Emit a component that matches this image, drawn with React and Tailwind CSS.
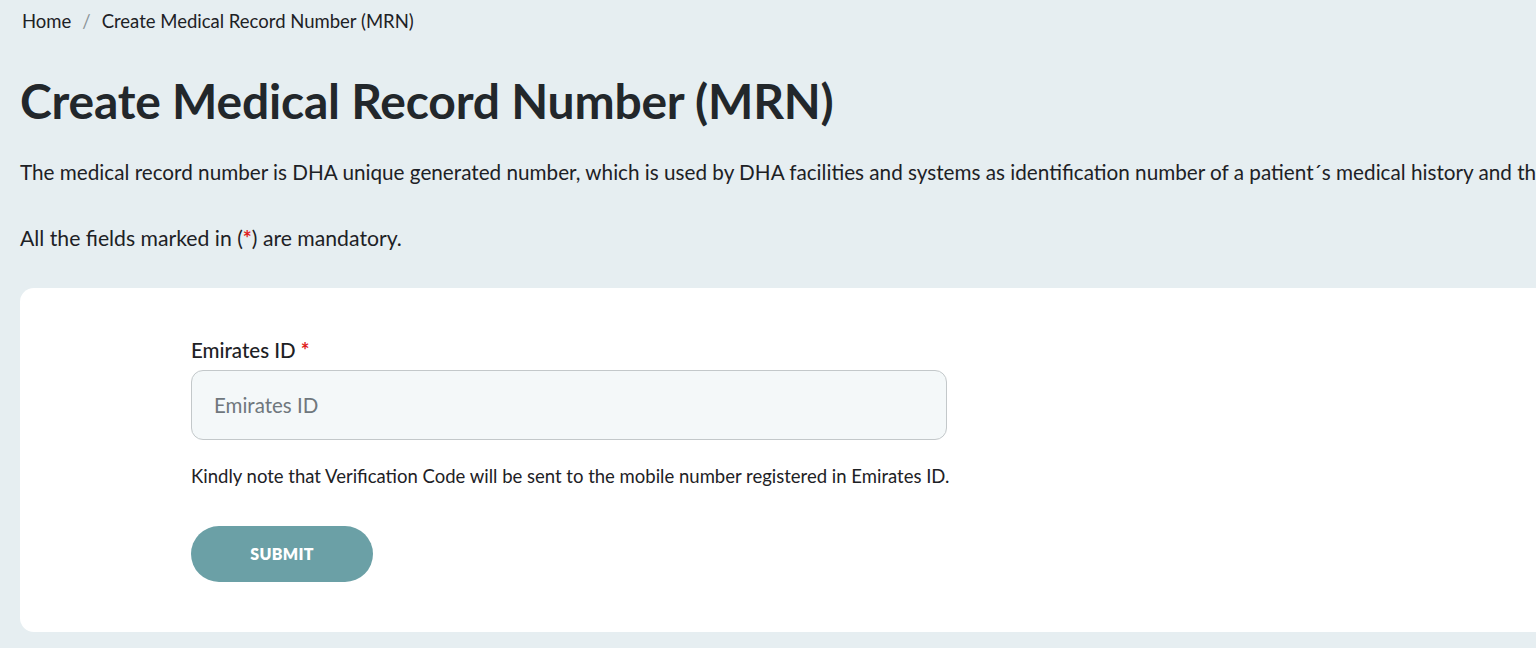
export default function App() {
  return (
    <div
      className="min-h-[648px] w-full overflow-hidden bg-[#e6eef1] text-[#1d2125]"
      style={{ fontFamily: 'Lato, "Open Sans", sans-serif' }}
    >
      <div className="w-[1800px] pl-5">
        <nav className="flex items-center pt-[10px] text-[18.5px] leading-[22px] text-[#1d2125]">
          <span className="ml-[2px]">Home</span>
          <span className="mx-[11px] text-[#8a9297]">/</span>
          <span>Create Medical Record Number (MRN)</span>
        </nav>

        <h1 className="mt-[41px] text-[48px] font-bold leading-[56px] tracking-[-0.2px] text-[#22272b]">
          Create Medical Record Number (MRN)
        </h1>

        <p className="mt-[30px] whitespace-nowrap text-[20.7px] leading-[26px]">
          The medical record number is DHA unique generated number, which is used by DHA facilities and systems as identification number of a patient´s medical history and their medical records.
        </p>

        <p className="mt-[40px] text-[21.2px] leading-[26px]">
          All the fields marked in (<span className="font-bold text-[#e0201b]">*</span>) are mandatory.
        </p>

        <div className="mt-[37px] h-[344px] rounded-l-[14px] bg-white pl-[171px] pt-[49px]">
          <label className="block text-[20.5px] font-medium leading-[26px] text-[#1d2125]">
            Emirates ID <span className="font-bold text-[#e0201b]">*</span>
          </label>
          <div className="mt-[7px] flex h-[70px] w-[756px] items-center rounded-[12px] border border-[#c3c8ca] bg-[#f4f8f9] px-[22px]">
            <input
              placeholder="Emirates ID"
              className="w-full bg-transparent text-[20.5px] text-[#1d2125] outline-none placeholder:text-[#6f777d]"
            />
          </div>
          <p className="mt-[24px] whitespace-nowrap text-[18.5px] leading-[24px] text-[#1d2125]">
            Kindly note that Verification Code will be sent to the mobile number registered in Emirates ID.
          </p>
          <button className="mt-[38px] flex h-[56px] w-[182px] items-center justify-center rounded-full bg-[#6ba0a6] text-[16px] font-extrabold tracking-[0.3px] text-white">
            SUBMIT
          </button>
        </div>
      </div>
    </div>
  );
}
